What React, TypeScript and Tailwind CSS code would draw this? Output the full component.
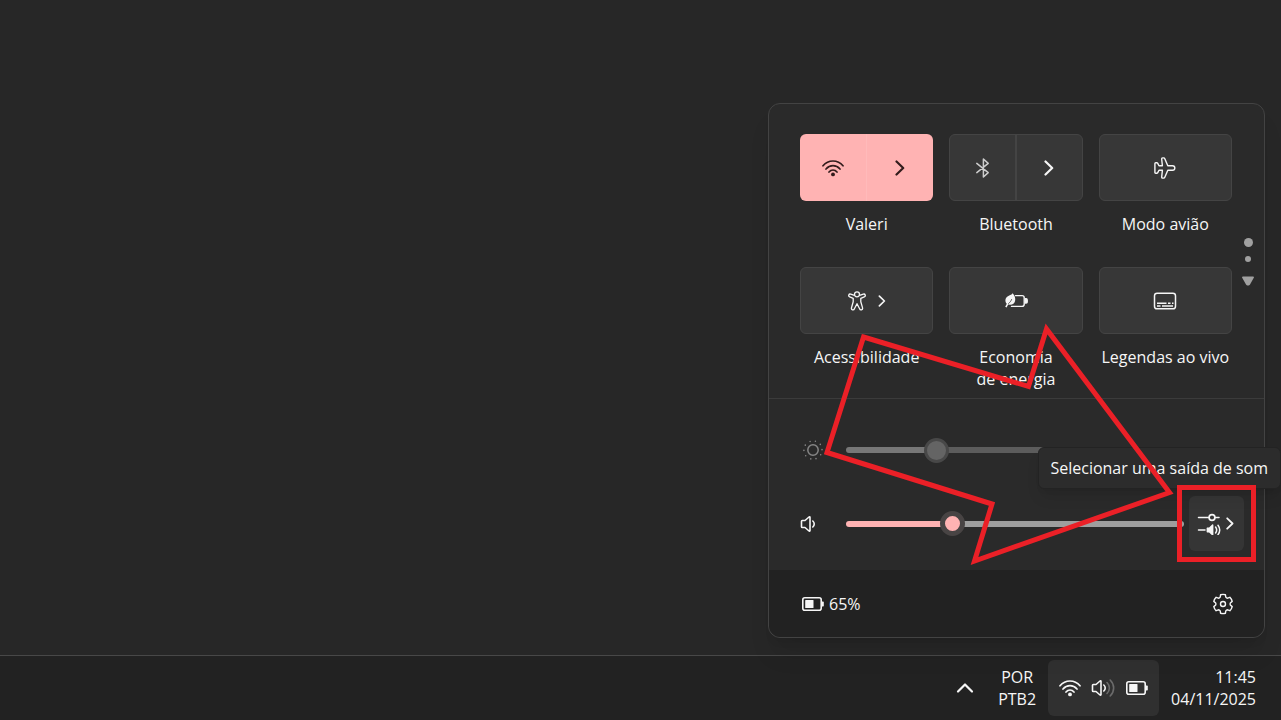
import React, { useState } from 'react';

const ChevronRight = ({ className = "" }: { className?: string }) => (
  <svg viewBox="0 0 10 16" className={className} fill="none" stroke="currentColor" strokeWidth="2.2" strokeLinecap="round" strokeLinejoin="round" aria-hidden="true">
    <path d="M1.5 1.5 8.2 8l-6.7 6.5" />
  </svg>
);

const WifiIcon = ({ className = "" }: { className?: string }) => (
  <svg viewBox="0 0 22 18" className={className} fill="none" stroke="currentColor" strokeWidth="1.7" strokeLinecap="round" aria-hidden="true">
    <path d="M1 6.8C6.4.4 15.6.4 21 6.8" />
    <path d="M4 10c3.8-4.6 10.2-4.6 14 0" />
    <path d="M7 13c2.2-2.7 5.8-2.7 8 0" />
    <circle cx="11" cy="15.4" r="1.9" fill="currentColor" stroke="none" />
  </svg>
);

const BluetoothIcon = () => (
  <svg viewBox="0 0 16 22" className="h-[22px] w-4" fill="none" stroke="currentColor" strokeWidth="1.5" strokeLinecap="round" strokeLinejoin="round" aria-hidden="true">
    <path d="M1.8 6.4 13.2 15.6 8.4 20V2l4.8 4.4L1.8 15.6" />
  </svg>
);

const PlaneIcon = () => (
  <svg viewBox="0 0 22 22" className="size-[22px]" fill="none" stroke="currentColor" strokeWidth="1.4" strokeLinejoin="round" aria-hidden="true">
    <path d="M8.4 8.8 7.7 2.2c-.1-.8.3-1.300 1-1.300h.9c.6 0 1 .3 1.200.8l3 7.100h4.700c3.100 0 3.100 4.400 0 4.400h-4.700l-3 7.100c-.2.500-.6.800-1.200.8h-.9c-.7 0-1.100-.5-1-1.300l.7-6.600H5l-1.400 2.700c-.2.300-.4.400-.8.400H1.700c-.5 0-.8-.3-.8-.8V6.500c0-.5.3-.8.8-.8h1.100c.4 0 .6.100.8.400L5 8.800z" />
  </svg>
);

const PersonIcon = () => (
  <svg viewBox="0 0 18 20" className="h-5 w-[18px]" fill="none" stroke="currentColor" strokeWidth="1.3" strokeLinejoin="round" aria-hidden="true">
    <circle cx="9" cy="3.3" r="2.5" />
    <path d="M6.4 4.400 2.700 3.100C.8 2.500-.1 5.100 1.700 5.800L5.200 7.300v3.500L3.500 16.700c-.6 2.200 2.200 3 2.900 1L9 12.700l2.600 5c.7 2 3.500 1.200 2.900-1l-1.700-5.900V7.300l3.500-1.500c1.800-.7.9-3.300-1-2.700l-3.700 1.300" />
  </svg>
);

const EcoIcon = () => (
  <svg viewBox="0 0 24 18" className="h-[18px] w-6" fill="none" stroke="currentColor" strokeWidth="1.4" strokeLinecap="round" strokeLinejoin="round" aria-hidden="true">
    <path d="M11.5 3.6h6.6c1.3 0 2.1.8 2.1 2.1v6.6c0 1.3-.8 2.1-2.1 2.1H7.5" />
    <path d="M21.3 6.8v4.2h.9c.6 0 1-.5 1-1.1v-2c0-.6-.4-1.1-1-1.1z" fill="currentColor" />
    <path d="M8.6 1.2c2.2 2.4 3.1 5 2.5 7.6-.5 2.6-2.6 4.2-5.3 4l-1.6-.2-1.600 3-1.400-.8 1.600-3C.8 9.300 1 6.200 3.500 4.400c1.700-1.200 3.900-1.300 5.100-3.200z" fill="currentColor" stroke="none" />
    <path d="M7.600 7.500c-.7 1.700-1.700 3-3 4" stroke="#373737" strokeWidth=".8" />
  </svg>
);

const CaptionsIcon = () => (
  <svg viewBox="0 0 24 18" className="h-[18px] w-6" fill="none" stroke="currentColor" strokeWidth="1.5" aria-hidden="true">
    <rect x="1.500" y="1.200" width="21" height="15.600" rx="2.600" />
    <path d="M4 11.200h9.500M15 11.200h2.500M19 11.200h1.500M4 14h3.500M9 14h11" strokeWidth="1.400" />
  </svg>
);

const SunIcon = () => (
  <svg viewBox="0 0 20 20" className="size-5" fill="none" stroke="currentColor" aria-hidden="true">
    <circle cx="10" cy="10" r="5.200" strokeWidth="1.500" />
    <path d="M12.400 1.200v.1M17.300 4.300v.1M19 9.600v.1M17.700 14.700v.1M13 18.600v.1M7.800 18.800v.1M2.700 15.700v.1M.9 10.300v.1M2.300 5.100v.1M7.100 1.400v.1" strokeWidth="1.500" strokeLinecap="round" />
  </svg>
);

const SpeakerIcon = ({ waves = false }: { waves?: boolean }) => (
  <svg viewBox="0 0 24 18" className="h-[18px] w-6" fill="none" stroke="currentColor" strokeWidth="1.600" strokeLinecap="round" strokeLinejoin="round" aria-hidden="true">
    <path d="M1.500 6.300c0-.5.3-.8.8-.8H5L9 2c.5-.4 1-.2 1 .4v13.200c0 .6-.5.8-1 .4l-4-3.500H2.300c-.5 0-.8-.3-.8-.8z" />
    <path d="M12.800 6c1.900 1.700 1.900 4.300 0 6" />
    {waves && (
      <g className="text-[#6b6b6b]" stroke="currentColor">
        <path d="M16 3.500c3.200 3.200 3.200 7.800 0 11" />
        <path d="M19.200 1c4.600 4.600 4.600 11.400 0 16" />
      </g>
    )}
  </svg>
);

const BatteryIcon = () => (
  <svg viewBox="0 0 24 16" className="h-4 w-6" aria-hidden="true">
    <rect x="1.800" y="1.800" width="18.400" height="12.400" rx="2" fill="none" stroke="currentColor" strokeWidth="1.600" />
    <rect x="4.200" y="4" width="8.300" height="8" rx=".6" fill="currentColor" />
    <path d="M21 5.500h.8c.6 0 1 .4 1 1v3c0 .6-.4 1-1 1H21z" fill="currentColor" />
  </svg>
);

const MixerIcon = () => (
  <svg viewBox="0 0 24 22" className="h-[22px] w-6" fill="none" stroke="currentColor" strokeWidth="1.500" strokeLinecap="round" aria-hidden="true">
    <path d="M1.500 4.500h10.300M18.200 4.500h3.800" />
    <circle cx="15" cy="4.500" r="2.900" strokeWidth="1.700" />
    <path d="M1.500 17h6.500" />
    <path d="M10.600 14.600h1.500l3.100-3c.5-.5 1.200-.2 1.200.5v9.800c0 .7-.7 1-1.200.5l-3.100-3h-1.500c-.6 0-1-.4-1-1v-2.800c0-.6.4-1 1-1z" fill="currentColor" stroke="none" />
    <path d="M18.600 14c1.300 1.800 1.300 4.200 0 6M21 12.300c2.200 3 2.200 6.400 0 9.400" />
  </svg>
);

const GearIcon = () => (
  <svg viewBox="0 0 22 22" className="size-[22px]" fill="none" stroke="currentColor" strokeWidth="1.400" strokeLinejoin="round" aria-hidden="true">
    <path d="M8.600 1.700Q11 1.100 13.400 1.700L13.800 4.100Q14.500 5 15.600 5.200L17.900 4.300Q19.600 6 20.200 8.400L18.300 10Q17.900 11 18.300 12L20.200 13.600Q19.600 16 17.900 17.700L15.600 16.800Q14.500 17 13.800 17.900L13.400 20.300Q11 20.900 8.600 20.300L8.200 17.900Q7.500 17 6.400 16.800L4.100 17.700Q2.400 16 1.800 13.600L3.700 12Q4.100 11 3.700 10L1.800 8.400Q2.400 6 4.100 4.300L6.400 5.200Q7.500 5 8.200 4.100Z" />
    <circle cx="11" cy="11" r="2.500" />
  </svg>
);

const tileClass = "h-[67px] w-full rounded-md border border-[#444444] bg-[#373737] flex items-center justify-center";

const Tile = ({ label, children }: { label: React.ReactNode; children: React.ReactNode }) => (
  <div className="flex flex-col gap-3 text-center">
    {children}
    <p className="whitespace-nowrap">{label}</p>
  </div>
);

const QuickSettings = () => {
  const [brightness, setBrightness] = useState(25);
  const [volume, setVolume] = useState(30);

  const track = (value: number, fill: string, rest: string) => ({
    background: `linear-gradient(to right, ${fill} ${value}%, ${rest} ${value}%)`,
  });

  return (
    <section aria-label="Configurações rápidas" className="relative w-[497px] max-w-full rounded-xl border border-[#434343] bg-[#2a2a2a] shadow-xl">
      <div className="flex border-b border-[#3b3b3b] pt-[30px] pb-2 pl-[31px]">
        <div className="grid flex-1 grid-cols-3 gap-x-4 gap-y-8">
          <Tile label="Valeri">
            <div className="flex h-[67px] overflow-hidden rounded-md bg-[#ffb3b3] text-[#321c1c]">
              <button aria-label="Wi-Fi" className="flex flex-1 items-center justify-center border-r border-[#ffbaba]">
                <WifiIcon className="h-[18px] w-[22px]" />
              </button>
              <button aria-label="Redes" className="flex flex-1 items-center justify-center">
                <ChevronRight className="h-4 w-[10px]" />
              </button>
            </div>
          </Tile>
          <Tile label="Bluetooth">
            <div className="flex h-[67px] overflow-hidden rounded-md border border-[#444444] bg-[#373737]">
              <button aria-label="Bluetooth" className="flex flex-1 items-center justify-center border-r-2 border-[#444444] text-[#cccccc]">
                <BluetoothIcon />
              </button>
              <button aria-label="Dispositivos" className="flex flex-1 items-center justify-center">
                <ChevronRight className="h-4 w-[10px]" />
              </button>
            </div>
          </Tile>
          <Tile label="Modo avião">
            <button aria-label="Modo avião" className={tileClass}><PlaneIcon /></button>
          </Tile>
          <Tile label="Acessibilidade">
            <button aria-label="Acessibilidade" className={`${tileClass} gap-3`}>
              <PersonIcon />
              <ChevronRight className="h-3 w-2" />
            </button>
          </Tile>
          <Tile label={<>Economia<br />de energia</>}>
            <button aria-label="Economia de energia" className={tileClass}><EcoIcon /></button>
          </Tile>
          <Tile label="Legendas ao vivo">
            <button aria-label="Legendas ao vivo" className={tileClass}><CaptionsIcon /></button>
          </Tile>
        </div>
        <div className="flex w-8 flex-col items-center pt-[104px]">
          <span className="size-[9px] rounded-full bg-[#a0a0a0]" />
          <span className="mt-[9px] size-[6px] rounded-full bg-[#a0a0a0]" />
          <svg viewBox="0 0 12 10" className="mt-[14px] h-[10px] w-3" aria-hidden="true">
            <path d="M1 .5h10c.9 0 1.200.7.8 1.300L8 8.400C7.500 9.200 7 9.500 6 9.500S4.500 9.200 4 8.400L.2 1.800C-.2 1.200.1.500 1 .500z" fill="#a0a0a0" />
          </svg>
        </div>
      </div>

      <div className="flex flex-col gap-[22px] pt-[27px] pr-5 pb-[19px] pl-[31px]">
        <div className="flex h-12 items-center">
          <span className="w-[46px] pl-[3px] text-[#868686]"><SunIcon /></span>
          <input
            type="range" aria-label="Brilho" disabled value={brightness}
            onChange={(e) => setBrightness(Number(e.target.value))}
            style={track(brightness, "#777777", "#5c5c5c")}
            className="mr-[60px] h-[6px] min-w-0 flex-1 appearance-none rounded-full [&::-webkit-slider-thumb]:size-[25px] [&::-webkit-slider-thumb]:appearance-none [&::-webkit-slider-thumb]:rounded-full [&::-webkit-slider-thumb]:border-[3px] [&::-webkit-slider-thumb]:border-[#484848] [&::-webkit-slider-thumb]:bg-[#646464]"
          />
        </div>
        <div className="flex h-[55px] items-center">
          <span className="w-[46px]"><SpeakerIcon /></span>
          <input
            type="range" aria-label="Volume" value={volume}
            onChange={(e) => setVolume(Number(e.target.value))}
            style={track(volume, "#ffb3b3", "#9e9e9e")}
            className="mr-[5px] h-[6px] min-w-0 flex-1 appearance-none rounded-full [&::-webkit-slider-thumb]:size-[25px] [&::-webkit-slider-thumb]:appearance-none [&::-webkit-slider-thumb]:rounded-full [&::-webkit-slider-thumb]:border-[5px] [&::-webkit-slider-thumb]:border-[#484444] [&::-webkit-slider-thumb]:bg-[#ffb3b3]"
          />
          <div className="relative">
            <button aria-label="Selecionar uma saída de som" className="flex size-[55px] items-center gap-[5px] rounded-md bg-[#353535] pl-2">
              <MixerIcon />
              <ChevronRight className="h-[13px] w-2" />
            </button>
            <div role="tooltip" className="absolute right-[-37px] bottom-[62px] rounded-md border border-[#232323] bg-[#2c2c2c] py-[9px] pr-3 pl-[11px] whitespace-nowrap shadow-lg">
              Selecionar uma saída de som
            </div>
            <span className="pointer-events-none absolute -inset-x-3 -inset-y-[11px] border-[5px] border-[#eb2027]" />
          </div>
        </div>
      </div>

      <div className="flex h-[67px] items-center justify-between rounded-b-xl bg-[#222222] pr-[30px] pl-8">
        <button className="flex items-center gap-1">
          <BatteryIcon />
          65%
        </button>
        <button aria-label="Configurações"><GearIcon /></button>
      </div>

      {/* callout arrow */}
      <svg viewBox="0 0 496 533" className="pointer-events-none absolute top-0 left-0 h-[533px] w-[496px]" aria-hidden="true">
        <path d="M94.500 233 259.500 282.500 277.500 225 400.500 388.500 205.500 457 223 400 58 348.500Z" fill="none" stroke="#eb2027" strokeWidth="5" strokeMiterlimit="10" />
      </svg>
    </section>
  );
};

const Taskbar = () => (
  <footer className="flex h-[65px] items-center justify-end border-t border-[#484848] bg-[#222222] pr-[25px]">
    <button aria-label="Mostrar ícones ocultos" className="mr-6">
      <svg viewBox="0 0 18 12" className="h-3 w-[18px]" fill="none" stroke="currentColor" strokeWidth="2.200" strokeLinecap="round" strokeLinejoin="round" aria-hidden="true">
        <path d="M2 9.500 9 2.500l7 7" />
      </svg>
    </button>
    <button className="mr-3 text-center">POR<br />PTB2</button>
    <button aria-label="Rede, som e bateria" className="mr-3 flex h-14 w-[111px] items-center justify-center gap-[10px] rounded-md bg-[#303030]">
      <WifiIcon className="h-[18px] w-[22px]" />
      <SpeakerIcon waves />
      <BatteryIcon />
    </button>
    <button className="text-right">11:45<br />04/11/2025</button>
  </footer>
);

export default function App() {
  return (
    <div className="flex min-h-screen flex-col overflow-hidden bg-[#272727] font-['Open_Sans','Noto_Sans',sans-serif] text-base leading-[22px] font-medium text-[#f6f6f6]">
      <main className="flex flex-1 items-end justify-end pr-4 pb-[17px]">
        <QuickSettings />
      </main>
      <Taskbar />
    </div>
  );
}
